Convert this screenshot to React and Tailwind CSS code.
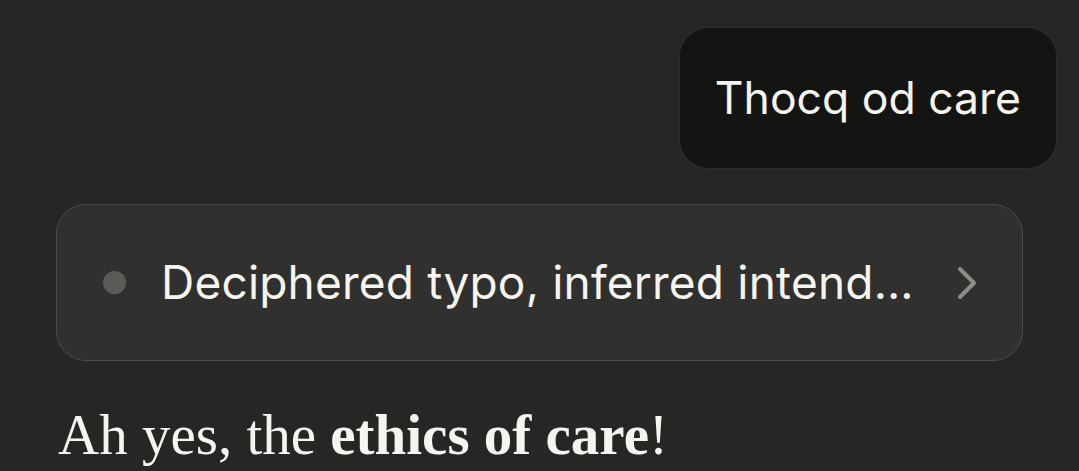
export default function App() {
  return (
    <div className="w-[1079px] h-[471px] overflow-hidden bg-[#262624] text-[#f5f4ef] font-['Inter',sans-serif]">
      <div className="flex justify-end pt-[28px] pr-[23px]">
        <div className="bg-[#141413] rounded-[28px] px-[35px] h-[140px] flex items-center text-[44.5px] ring-1 ring-[#2e2e2c]">
          Thocq od care
        </div>
      </div>

      <div className="mt-[36px] ml-[56px] mr-[56px]">
        <div className="h-[157px] rounded-[30px] border border-[#4c4c49] bg-[#30302e] flex items-center pl-[46px] pr-[45px]">
          <span className="w-[23px] h-[23px] rounded-full bg-[#5a5a57] shrink-0" />
          <span className="ml-[35px] flex-1 text-[46px] tracking-[0.2px] text-[#f5f4ef] whitespace-nowrap">
            Deciphered typo, inferred intend…
          </span>
          <svg width="20" height="34" viewBox="0 0 20 34" fill="none" className="shrink-0">
            <path d="M3 3 L17 17 L3 31" stroke="#8e8d88" strokeWidth="4" strokeLinecap="round" strokeLinejoin="round" />
          </svg>
        </div>
      </div>

      <div className="ml-[58px] mt-[45px] text-[57px] leading-none font-['Liberation_Serif',serif] text-[#f5f4ef]">
        Ah yes, the <span className="font-bold">ethics of care</span>!
      </div>
    </div>
  );
}
